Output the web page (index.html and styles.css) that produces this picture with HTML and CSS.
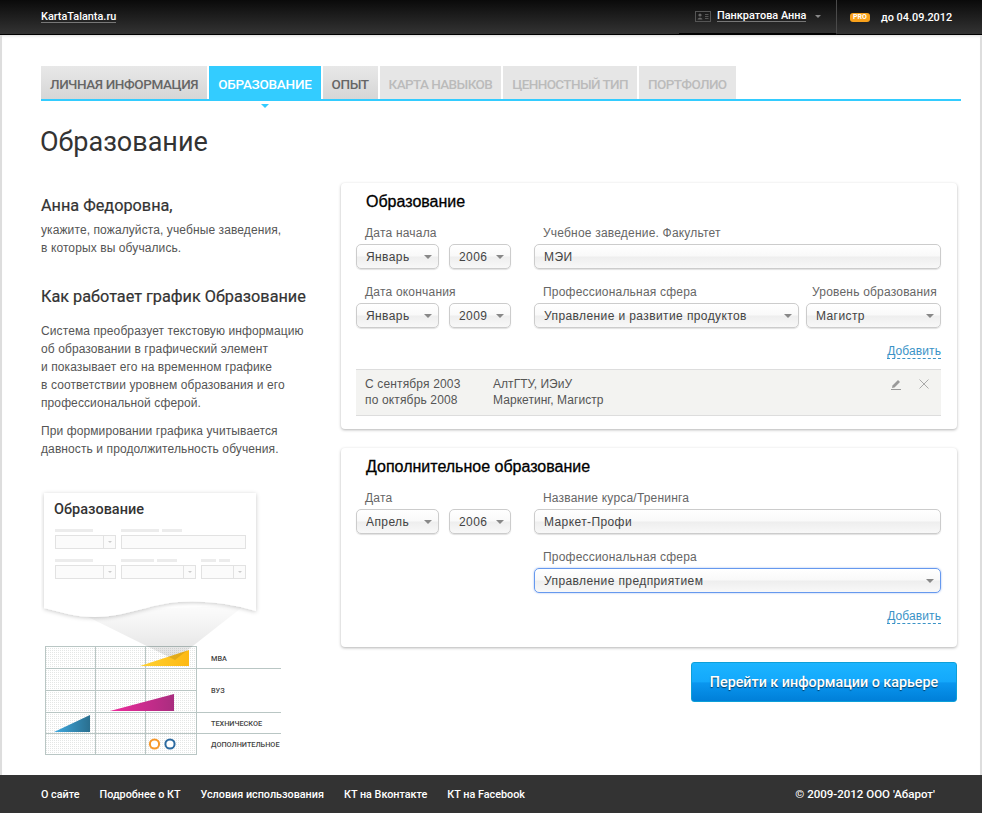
FILE: index.html
```html
<!DOCTYPE html>
<html lang="ru">
<head>
  <meta charset="UTF-8" />
  <title>Образование - KartaTalanta.ru</title>
  <link rel="stylesheet" href="styles.css">
</head>
<body>
  <div class="topbar">
    <a class="logo" href="#">KartaTalanta.ru</a>
    <div class="user">
      <svg class="user-icon" width="16" height="11" viewBox="0 0 16 11">
        <rect x="0.5" y="0.5" width="15" height="10" fill="none" stroke="#555" />
        <circle cx="5" cy="4" r="1.6" fill="#666" />
        <path d="M2.5 8.5 C3 6 7 6 7.5 8.5 Z" fill="#666" />
        <path d="M10 3.5 H13.5 M10 5.5 H13.5 M10 7.5 H13.5" stroke="#555" />
      </svg>
      <a class="user-name" href="#">Панкратова Анна</a>
      <span class="user-caret"></span>
    </div>
    <div class="pro">
      <span class="pro-badge">PRO</span>
      <span class="pro-date">до 04.09.2012</span>
    </div>
  </div>

  <div class="page">
    <div class="tabs">
      <a class="tab" href="#">Личная информация</a>
      <a class="tab active" href="#">Образование</a>
      <a class="tab" href="#">Опыт</a>
      <a class="tab disabled" href="#">Карта навыков</a>
      <a class="tab disabled" href="#">Ценностный тип</a>
      <a class="tab disabled" href="#">Портфолио</a>
    </div>
    <h1 class="page-title">Образование</h1>

    <div class="columns">
      <div class="sidebar">
        <h2>Анна Федоровна,</h2>
        <p>укажите, пожалуйста, учебные заведения,<br>в которых вы обучались.</p>
        <h2 class="how">Как работает график Образование</h2>
        <p class="how-text">Система преобразует текстовую информацию<br>об образовании в графический элемент<br>и показывает его на временном графике<br>в соответствии уровнем образования и его<br>профессиональной сферой.</p>
        <p class="how-text second">При формировании графика учитывается<br>давность и продолжительность обучения.</p>

        <svg class="scheme" width="245" height="270" viewBox="41 488 245 270">
          <defs>
            <pattern id="dots" width="2" height="2" patternUnits="userSpaceOnUse">
              <rect width="1" height="1" fill="#e4e6e5" />
            </pattern>
            <linearGradient id="funnel" x1="0" y1="0" x2="0" y2="1">
              <stop offset="0" stop-color="#000" stop-opacity="0.01" />
              <stop offset="0.4" stop-color="#000" stop-opacity="0.05" />
              <stop offset="1" stop-color="#000" stop-opacity="0.12" />
            </linearGradient>
            <linearGradient id="yellow" x1="0" y1="0" x2="1" y2="0">
              <stop offset="0" stop-color="#ffd233" />
              <stop offset="1" stop-color="#fdb913" />
            </linearGradient>
            <linearGradient id="pink" x1="0" y1="0" x2="1" y2="0">
              <stop offset="0" stop-color="#ee2a9c" />
              <stop offset="1" stop-color="#a92d7f" />
            </linearGradient>
            <linearGradient id="blue" x1="0" y1="0" x2="1" y2="0">
              <stop offset="0" stop-color="#3fa9e0" />
              <stop offset="1" stop-color="#2a6f8f" />
            </linearGradient>
            <filter id="soft" x="-10%" y="-10%" width="120%" height="120%">
              <feDropShadow dx="0" dy="1" stdDeviation="2" flood-color="#000" flood-opacity="0.22" />
            </filter>
          </defs>

          <rect x="45" y="647" width="151" height="107" fill="url(#dots)" />
          <g stroke="#b9c6c4" stroke-width="1" fill="none">
            <rect x="45.5" y="646.5" width="151" height="108" />
            <path d="M95.5 647 V754 M145.5 647 V754" />
            <path d="M45 668.5 H281 M45 690.5 H196 M45 712.5 H281 M45 733.5 H281" />
          </g>
          <polygon points="140,666 189,650 189,666" fill="url(#yellow)" />
          <polygon points="110,711 174,694 174,711" fill="url(#pink)" />
          <polygon points="54,732 90,715 90,732" fill="url(#blue)" />
          <circle cx="154.5" cy="744" r="4.6" fill="#fff" stroke="#f7982a" stroke-width="2" />
          <circle cx="170" cy="744" r="4.6" fill="#fff" stroke="#2c6aa0" stroke-width="2" />
          <polygon points="78,612 245,605 175,660" fill="url(#funnel)" />

          <path d="M44 493 H256 V611 C232 604 205 600 178 602 C150 604 125 617 95 617 C75 617 60 612 44 608 Z" fill="#fff" filter="url(#soft)" />
          <text x="54" y="514" class="scheme-title">Образование</text>
          <g fill="#ececec">
            <rect x="55" y="529" width="38" height="3" />
            <rect x="121" y="529" width="38" height="3" />
            <rect x="162" y="529" width="20" height="3" />
            <rect x="55" y="559" width="38" height="3" />
            <rect x="121" y="559" width="33" height="3" />
            <rect x="157" y="559" width="20" height="3" />
            <rect x="201" y="559" width="15" height="3" />
            <rect x="219" y="559" width="11" height="3" />
          </g>
          <g fill="#fbfbfb" stroke="#e2e2e2">
            <rect x="55.5" y="535.5" width="60" height="13" />
            <rect x="121.5" y="535.5" width="124" height="13" />
            <rect x="55.5" y="565.5" width="60" height="13" />
            <rect x="121.5" y="565.5" width="74" height="13" />
            <rect x="201.5" y="565.5" width="44" height="13" />
            <path d="M103.5 536 V548 M103.5 566 V578 M183.5 566 V578 M233.5 566 V578" />
          </g>
          <g fill="#ccc">
            <polygon points="108,541 112,541 110,543" />
            <polygon points="108,571 112,571 110,573" />
            <polygon points="188,571 192,571 190,573" />
            <polygon points="238,571 242,571 240,573" />
          </g>
          <g class="scheme-label">
            <text x="211" y="661">МВА</text>
            <text x="211" y="693">ВУЗ</text>
            <text x="211" y="726">ТЕХНИЧЕСКОЕ</text>
            <text x="211" y="747">ДОПОЛНИТЕЛЬНОЕ</text>
          </g>
        </svg>
      </div>

      <div class="content">
        <div class="card">
          <div class="card-title">Образование</div>
          <div class="row">
            <div class="field">
              <label>Дата начала</label>
              <div class="inline">
                <div class="select month"><select><option>Январь</option></select></div>
                <div class="select year"><select><option>2006</option></select></div>
              </div>
            </div>
            <div class="field grow">
              <label>Учебное заведение. Факультет</label>
              <input class="text-input" type="text" value="МЭИ" />
            </div>
          </div>
          <div class="row">
            <div class="field">
              <label>Дата окончания</label>
              <div class="inline">
                <div class="select month"><select><option>Январь</option></select></div>
                <div class="select year"><select><option>2009</option></select></div>
              </div>
            </div>
            <div class="field">
              <label>Профессиональная сфера</label>
              <div class="select sphere"><select><option>Управление и развитие продуктов</option></select></div>
            </div>
            <div class="field level-field">
              <label class="level-label">Уровень образования</label>
              <div class="select level"><select><option>Магистр</option></select></div>
            </div>
          </div>
          <div class="add-row"><a class="add" href="#">Добавить</a></div>
          <div class="item">
            <div class="item-dates">С сентября 2003<br>по октябрь 2008</div>
            <div class="item-info">АлтГТУ, ИЭиУ<br>Маркетинг, Магистр</div>
            <div class="item-actions">
              <svg width="12" height="12" viewBox="0 0 12 12">
                <path d="M2.5 7.5 L8 2 L10 4 L4.5 9.5 L2 10 Z" fill="#999" />
                <path d="M1 11.5 H11" stroke="#999" />
              </svg>
              <svg class="remove" width="10" height="10" viewBox="0 0 10 10">
                <path d="M0.5 0.5 L9.5 9.5 M9.5 0.5 L0.5 9.5" stroke="#aaa" fill="none" />
              </svg>
            </div>
          </div>
        </div>

        <div class="card second-card">
          <div class="card-title">Дополнительное образование</div>
          <div class="row">
            <div class="field">
              <label>Дата</label>
              <div class="inline">
                <div class="select month"><select><option>Апрель</option></select></div>
                <div class="select year"><select><option>2006</option></select></div>
              </div>
            </div>
            <div class="field grow">
              <label>Название курса/Тренинга</label>
              <input class="text-input" type="text" value="Маркет-Профи" />
            </div>
          </div>
          <div class="row offset">
            <div class="field grow">
              <label>Профессиональная сфера</label>
              <div class="select wide focused"><select><option>Управление предприятием</option></select></div>
            </div>
          </div>
          <div class="add-row"><a class="add" href="#">Добавить</a></div>
        </div>

        <div class="actions">
          <button class="next" type="button">Перейти к информации о карьере</button>
        </div>
      </div>
    </div>
  </div>

  <div class="footer">
    <a href="#">О сайте</a>
    <a href="#">Подробнее о КТ</a>
    <a href="#">Условия использования</a>
    <a href="#">КТ на Вконтакте</a>
    <a href="#">КТ на Facebook</a>
    <span class="copyright">© 2009-2012 ООО 'Абарот'</span>
  </div>
</body>
</html>
```
FILE: styles.css
```css
body {
  font-family: "Liberation Sans", Arial, sans-serif;
  font-size: 12px;
  color: #555;
  background: #fff;
  margin: 0;
  min-height: 813px;
  display: flex;
  flex-direction: column;
}
a {
  color: inherit;
  text-decoration: none;
}

/* top bar */
.topbar {
  height: 35px;
  box-sizing: border-box;
  padding-left: 41px;
  display: flex;
  align-items: center;
  background: linear-gradient(#0a0a0a, #333);
  border-bottom: 1px solid #000;
  font-family: Roboto, sans-serif;
  font-weight: 500;
  font-size: 10.9px;
  color: #fff;
}
.logo {
  border-bottom: 1px solid #777;
  line-height: 11px;
}
.user {
  margin-left: auto;
  width: 158px;
  height: 35px;
  box-sizing: border-box;
  padding-left: 16px;
  display: flex;
  align-items: center;
  border-bottom: 2px solid #000;
  border-right: 1px solid #4a4a4a;
}
.user-name {
  margin-left: 6px;
  border-bottom: 1px solid #777;
  line-height: 11px;
}
.user-caret {
  margin-left: 9px;
  border: 3px solid transparent;
  border-top: 3px solid #888;
  border-bottom: 0;
}
.pro {
  width: 145px;
  box-sizing: border-box;
  padding-left: 13px;
  display: flex;
  align-items: center;
}
.pro-badge {
  width: 20px;
  height: 9px;
  border-radius: 3px;
  background: #f9a11b;
  font-size: 7px;
  font-weight: 700;
  line-height: 9px;
  text-align: center;
}
.pro-date {
  margin-left: 11px;
}

/* page */
.page {
  flex: 1;
  padding: 31px 19px 0 39px;
  border-left: 2px solid #ddd;
  border-right: 2px solid #ddd;
  box-shadow: inset 0 3px 3px -2px rgba(0, 0, 0, 0.15);
}
.tabs {
  display: flex;
  gap: 2px;
  height: 35px;
  box-sizing: border-box;
  border-bottom: 2px solid #33ccff;
}
.tab {
  height: 33px;
  padding: 0 9px;
  line-height: 36px;
  font-family: Roboto, sans-serif;
  font-weight: 500;
  font-size: 13.5px;
  letter-spacing: -0.4px;
  text-transform: uppercase;
  color: #666;
  background: linear-gradient(#e8e8e8, #d6d6d6);
}
.tab.active {
  position: relative;
  height: 35px;
  letter-spacing: -0.25px;
  color: #fff;
  background: #33ccff;
}
.tab.active::after {
  content: '';
  position: absolute;
  left: 50%;
  bottom: -7px;
  margin-left: -4px;
  border: 4px solid transparent;
  border-top: 4px solid #33ccff;
  border-bottom: 0;
}
.tab.disabled {
  letter-spacing: -0.6px;
  color: #bbb;
  background: #e6e6e6;
}
.page-title {
  margin: 23px 0 0 -1px;
  font-family: Roboto, sans-serif;
  font-weight: 400;
  font-size: 27px;
  line-height: 36px;
  color: #333;
}
.columns {
  display: flex;
  margin-top: 23px;
}

/* left column */
.sidebar {
  width: 300px;
  flex: none;
  padding-top: 12px;
}
.sidebar h2 {
  margin: 0;
  font-family: Roboto, sans-serif;
  font-weight: 400;
  font-size: 16.25px;
  line-height: 22px;
  -webkit-text-stroke: 0.2px #333;
  color: #333;
}
.sidebar h2.how {
  margin-top: 29px;
}
.sidebar p {
  margin: 4px 0 0;
  line-height: 18px;
  letter-spacing: 0.1px;
  color: #555;
}
.sidebar p.how-text {
  margin-top: 14px;
}
.sidebar p.how-text.second {
  margin-top: 10px;
}
.scheme {
  display: block;
  margin-top: 30px;
}
.scheme-title {
  font-family: Roboto, sans-serif;
  font-weight: 500;
  font-size: 14.5px;
  fill: #333;
}
.scheme-label {
  font-family: Roboto, sans-serif;
  font-weight: 500;
  font-size: 7.3px;
  fill: #444;
}

/* form cards */
.content {
  width: 616px;
}
.card {
  padding: 9px 16px 13px 15px;
  border-radius: 4px;
  background: #fff;
  box-shadow: 0 1px 3px rgba(0, 0, 0, 0.3);
}
.second-card {
  margin-top: 19px;
  padding-bottom: 23px;
}
.card-title {
  margin-left: 10px;
  font-size: 16px;
  line-height: 20px;
  -webkit-text-stroke: 0.3px #000;
  color: #000;
  margin-bottom: 12px;
}
.row {
  display: flex;
  gap: 23px;
  margin-bottom: 14px;
}
.row.offset {
  margin-left: 178px;
}
.field label {
  display: block;
  margin: 1px 0 3px 9px;
  line-height: 16px;
  letter-spacing: 0.2px;
  color: #666;
}
.field.grow {
  flex: 1;
}
.level-field {
  margin-left: -16px;
}
.field .level-label {
  margin-left: 6px;
}
.inline {
  display: flex;
  gap: 10px;
}
.text-input,
.select select {
  width: 100%;
  height: 25px;
  box-sizing: border-box;
  padding: 0 9px;
  font-family: "Liberation Sans", Arial, sans-serif;
  font-size: 12px;
  letter-spacing: 0.4px;
  color: #444;
  border: 1px solid #ccc;
  border-radius: 5px;
  background: linear-gradient(#fff, #f9f9f9 48%, #eee 52%, #f8f8f8);
  box-shadow: 0 1px 1px rgba(0, 0, 0, 0.12);
  appearance: none;
  outline: none;
}
.select {
  position: relative;
}
.select::after {
  content: '';
  position: absolute;
  right: 7px;
  top: 11px;
  border: 4px solid transparent;
  border-top: 4px solid #888;
  border-bottom: 0;
  pointer-events: none;
}
.month {
  width: 83px;
}
.year {
  width: 62px;
}
.sphere {
  width: 265px;
}
.level {
  width: 135px;
}
.focused select {
  border-color: #6699ee;
  box-shadow: 0 0 2px rgba(80, 130, 230, 0.6);
}
.add-row {
  margin-top: 15px;
  text-align: right;
  line-height: 16px;
}
.add {
  color: #3a93c7;
  letter-spacing: 0.1px;
  border-bottom: 1px dashed #3a93c7;
}
.item {
  display: flex;
  height: 47px;
  box-sizing: border-box;
  margin-top: 10px;
  padding: 6px 9px;
  line-height: 16px;
  letter-spacing: 0.15px;
  color: #555;
  background: #f3f3f1;
  border-top: 1px solid #ddd;
  border-bottom: 1px solid #ddd;
}
.item-dates {
  width: 128px;
}
.item-info {
  letter-spacing: 0.05px;
}
.item-actions {
  margin-left: auto;
  display: flex;
  gap: 17px;
  align-items: flex-start;
  padding-top: 2px;
  margin-right: 3px;
}
.remove {
  margin-top: 1px;
}
.actions {
  margin-top: 15px;
  text-align: right;
}
.next {
  width: 266px;
  height: 40px;
  font-family: Roboto, sans-serif;
  font-weight: 500;
  font-size: 14.3px;
  color: #fff;
  text-shadow: 0 1px 1px rgba(0, 0, 0, 0.6);
  border: 1px solid #0d9fd8;
  border-radius: 3px;
  background: linear-gradient(#1bb4ff, #14a8fb 50%, #0a96ef 52%, #007fd8);
  cursor: pointer;
}

/* footer */
.footer {
  height: 38px;
  flex: none;
  padding: 0 47px 0 41px;
  display: flex;
  align-items: center;
  gap: 20px;
  background: #333;
  font-family: Roboto, sans-serif;
  font-weight: 500;
  font-size: 10.8px;
  color: #fff;
}
.copyright {
  margin-left: auto;
  font-size: 11.5px;
}
```
